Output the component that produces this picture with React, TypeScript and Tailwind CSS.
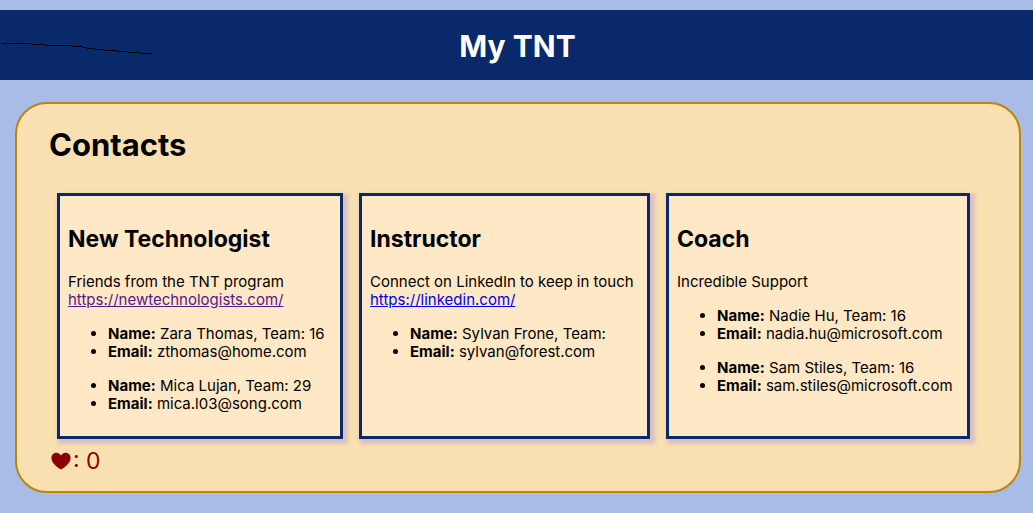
import React, { useState } from "react";

type Person = { name: string; team: string; email: string };
type Group = {
  title: string;
  note: string;
  link?: string;
  linkClass?: string;
  cardClass: string;
  people: Person[];
};

const groups: Group[] = [
  {
    title: "New Technologist",
    note: "Friends from the TNT program",
    link: "https://newtechnologists.com/",
    linkClass: "text-[#551a8b] underline",
    cardClass: "min-w-[286px]",
    people: [
      { name: "Zara Thomas", team: "16", email: "zthomas@home.com" },
      { name: "Mica Lujan", team: "29", email: "mica.l03@song.com" },
    ],
  },
  {
    title: "Instructor",
    note: "Connect on LinkedIn to keep in touch",
    link: "https://linkedin.com/",
    linkClass: "text-[#0000ee] underline",
    cardClass: "min-w-[291px]",
    people: [{ name: "Sylvan Frone", team: "", email: "sylvan@forest.com" }],
  },
  {
    title: "Coach",
    note: "Incredible Support",
    cardClass: "min-w-[304px]",
    people: [
      { name: "Nadie Hu", team: "16", email: "nadia.hu@microsoft.com" },
      { name: "Sam Stiles", team: "16", email: "sam.stiles@microsoft.com" },
    ],
  },
];

function Card({ group }: { group: Group }) {
  return (
    <section
      className={`border-3 border-[#0a296b] bg-[#fee8c6] px-2 pt-[9px] pb-[7px] shadow-[3px_3px_4px_2px_#d8bfc2] ${group.cardClass}`}
    >
      <h2 className="my-5 text-[23px] leading-7 font-bold">{group.title}</h2>
      <p>
        {group.note}
        {group.link && (
          <>
            <br />
            <a href={group.link} className={group.linkClass}>
              {group.link}
            </a>
          </>
        )}
      </p>
      {group.people.map((p) => (
        <ul key={p.email} className="my-4 list-disc pl-10">
          <li>
            <b>Name:</b> {p.name}, Team: {p.team}
          </li>
          <li>
            <b>Email:</b> {p.email}
          </li>
        </ul>
      ))}
    </section>
  );
}

export default function App() {
  const [likes, setLikes] = useState(0);
  return (
    <div className="min-h-screen bg-[#a9bce8] py-[10px] font-['Inter','Liberation_Sans',sans-serif] text-[15px] leading-[18px] text-black">
      <header className="relative flex h-[70px] items-center justify-center bg-[#0a296b] pt-0.5 pl-0.5">
        <svg
          className="absolute top-0 left-0"
          width="160"
          height="70"
          viewBox="0 0 160 70"
          fill="none"
          stroke="#000"
          shapeRendering="crispEdges"
          aria-hidden="true"
        >
          <path d="M2 33.5H31M31 34.5H45M45 35.5H72M72 36.5H82M82 37.5H87M87 38.5H95M95 39.5H104M104 40.5H117M117 41.5H128M128 42.5H140M140 43.5H152" />
        </svg>
        <h1 className="text-[30px] leading-[38px] font-bold text-white">My TNT</h1>
      </header>
      <main className="mt-[22px] mr-3 ml-[15px] rounded-[32px] border-2 border-[#b8860b] bg-[#f9e0b0] px-8 pt-[22px] pb-4">
        <h1 className="text-[31px] leading-[38px] font-bold">Contacts</h1>
        <div className="mx-2 mt-[29px] mb-2 flex gap-4">
          {groups.map((g) => (
            <Card key={g.title} group={g} />
          ))}
        </div>
        <button
          type="button"
          aria-label={`Likes: ${likes}`}
          onClick={() => setLikes(likes + 1)}
          className="flex items-center text-[23px] leading-7 text-[#8b0000]"
        >
          <svg width="24" height="24" viewBox="0 0 24 24" fill="currentColor" aria-hidden="true">
            <path d="M12 20.6C9.5 19.2 2.4 14.6 2.4 9.1C2.4 6 4.6 3.7 7.3 3.7C9.3 3.7 11 4.8 12 6.5C13 4.8 14.7 3.7 16.7 3.7C19.4 3.7 21.6 6 21.6 9.1C21.6 14.6 14.5 19.2 12 20.6Z" />
          </svg>
          <span>: {likes}</span>
        </button>
      </main>
    </div>
  );
}
